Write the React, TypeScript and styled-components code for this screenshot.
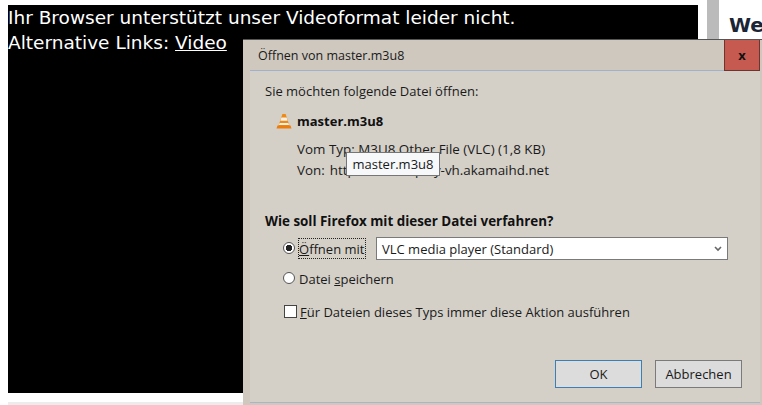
import styled, { createGlobalStyle } from "styled-components";

const GlobalStyle = createGlobalStyle`
  html, body {
    margin: 0;
    padding: 0;
    background-color: #fff;
    overflow: hidden;
  }
`;

const Page = styled.div`
  position: relative;
  width: 762px;
  height: 405px;
  overflow: hidden;
  padding-left: 8px;
  box-sizing: border-box;
  display: flex;
  flex-direction: column;
`;

const Content = styled.div`
  height: 402px;
  display: flex;
  flex-shrink: 0;
`;

const FooterStrip = styled.div`
  flex: 1;
  background-color: #ececec;
`;

const Video = styled.div`
  width: 690px;
  height: 388px;
  flex-shrink: 0;
  margin-top: 5px;
  background-color: #000;
  color: #fff;
  font-family: "DejaVu Sans", Verdana, sans-serif;
  font-size: 18.5px;
  line-height: 25px;
  white-space: nowrap;
`;

const VideoLink = styled.a`
  color: #fff;
  text-decoration: underline;
`;

const Sidebar = styled.div`
  margin-left: 9px;
  display: flex;
  flex-shrink: 0;
  align-items: flex-start;
`;

const SidebarEdge = styled.div`
  width: 12px;
  height: 40px;
  background-color: #bbb;
`;

const SidebarTitle = styled.h2`
  margin: 13px 0 0 10px;
  font-family: "DejaVu Sans", Verdana, sans-serif;
  font-size: 20px;
  line-height: 24px;
  font-weight: 700;
  color: #1b2535;
  white-space: nowrap;
`;

const Dialog = styled.div`
  position: absolute;
  left: 243px;
  top: 39px;
  width: 519px;
  height: 366px;
  box-sizing: border-box;
  background-color: #cfc8bf;
  border-top: 1px solid #555;
  padding: 0 2px 0 7px;
  display: flex;
  flex-direction: column;
  font-family: "Open Sans", "Noto Sans", sans-serif;
  font-size: 13px;
  color: #1a1a1a;
`;

const TitleBar = styled.div`
  height: 31px;
  flex-shrink: 0;
  display: flex;
  align-items: center;
  justify-content: space-between;
  padding-left: 8px;
  box-sizing: border-box;
  border-bottom: 1px solid #9fb1cc;
  font-size: 12.5px;
`;

const CloseButton = styled.div`
  width: 36px;
  height: 31px;
  box-sizing: border-box;
  background-color: #c75a50;
  border: 1px solid #6e3530;
  border-top: 0;
  display: flex;
  align-items: center;
  justify-content: center;
  font-weight: 700;
  font-size: 13px;
  color: #111;
`;

const Body = styled.div`
  flex: 1;
  background-color: #d4d0c8;
  padding: 12px 18px 14px 15px;
  display: flex;
  flex-direction: column;
  position: relative;
`;

const Line = styled.div`
  line-height: 17px;
  white-space: nowrap;
`;

const FileRow = styled.div`
  margin: 12px 0 0 11px;
  display: flex;
  align-items: center;
  gap: 5px;
  height: 18px;
`;

const FileName = styled.span`
  font-weight: 700;
  color: #111;
`;

const FileDetails = styled.div`
  margin: 11px 0 0 32px;
  display: flex;
  flex-direction: column;
  gap: 4px;
  font-size: 13.4px;
`;

const SourceValue = styled.span`
  margin-left: 5px;
`;

const Question = styled(Line)`
  margin-top: 34px;
  font-size: 13.4px;
  font-weight: 700;
  color: #111;
`;

const OpenRow = styled.div`
  margin: 7px 0 0 18px;
  display: flex;
  align-items: center;
  height: 23px;
`;

const SaveRow = styled.div`
  margin: 7px 0 0 18px;
  display: flex;
  align-items: center;
  height: 23px;
`;

const CheckRow = styled.div`
  margin: 10px 0 0 19px;
  display: flex;
  align-items: center;
  height: 23px;
`;

const Radio = styled.span<{ $checked?: boolean }>`
  width: 12px;
  height: 12px;
  box-sizing: border-box;
  border-radius: 50%;
  border: 1px solid #555;
  background: ${(p) =>
    p.$checked
      ? "radial-gradient(circle, #222 0 3px, #fff 3.5px)"
      : "#fff"};
  flex-shrink: 0;
  margin-right: 4px;
  margin-top: -2px;
`;

const CheckBox = styled.span`
  width: 13px;
  height: 13px;
  box-sizing: border-box;
  border: 1px solid #444;
  background-color: #fff;
  flex-shrink: 0;
  margin-right: 3px;
`;

const FocusLabel = styled.span`
  width: 68px;
  height: 21px;
  box-sizing: border-box;
  margin-left: -1px;
  border: 1px dotted #222;
  display: flex;
  align-items: center;
  white-space: nowrap;
`;

const PlainLabel = styled.span`
  white-space: nowrap;
`;

const AccessKey = styled.span`
  text-decoration: underline;
`;

const AppSelect = styled.div`
  margin-left: 10px;
  width: 352px;
  height: 23px;
  box-sizing: border-box;
  background-color: #fff;
  border: 1px solid #7a7a7a;
  padding: 0 5px;
  display: flex;
  align-items: center;
  justify-content: space-between;
`;

const Buttons = styled.div`
  margin-top: auto;
  align-self: flex-end;
  display: flex;
  gap: 13px;
`;

const Button = styled.div<{ $default?: boolean }>`
  width: 87px;
  height: 28px;
  box-sizing: border-box;
  background-color: #dcdcdc;
  border: 1px solid ${(p) => (p.$default ? "#3a7fb5" : "#7a7a7a")};
  display: flex;
  align-items: center;
  justify-content: center;
`;

const BottomLine = styled.div`
  height: 1px;
  flex-shrink: 0;
  background-color: #a9b4c6;
  margin-bottom: 2px;
`;

const Tooltip = styled.div`
  position: absolute;
  left: 96px;
  top: 81px;
  width: 94px;
  height: 24px;
  box-sizing: border-box;
  background-color: #f7f8fa;
  border: 1px solid #767676;
  display: flex;
  align-items: center;
  justify-content: center;
  white-space: nowrap;
`;

const ConeIcon = () => (
  <svg width="16" height="17" viewBox="0 0 16 17">
    <path d="M6.4 1h3.2l4 12H2.4z" fill="#f08a12" />
    <path d="M5.4 4.6h5.2l1 3.2H4.4z" fill="#f4f1ec" />
    <path d="M3.7 10h8.6l.8 2H2.9z" fill="#f4f1ec" />
    <path d="M1.5 12.6h13l1 2.9H.5z" fill="#ee7d0c" />
  </svg>
);

const ChevronIcon = () => (
  <svg width="8" height="6" viewBox="0 0 8 6">
    <path d="M1 1l3 3 3-3" fill="none" stroke="#666" strokeWidth="1.6" />
  </svg>
);

export default function App() {
  return (
    <>
      <GlobalStyle />
      <Page>
        <Content>
          <Video>
            Ihr Browser unterstützt unser Videoformat leider nicht.
            <br />
            Alternative Links: <VideoLink href="#">Video</VideoLink>
          </Video>
          <Sidebar>
            <SidebarEdge />
            <SidebarTitle>Weitere</SidebarTitle>
          </Sidebar>
        </Content>
        <FooterStrip />

        <Dialog>
          <TitleBar>
            Öffnen von master.m3u8
            <CloseButton>x</CloseButton>
          </TitleBar>
          <Body>
            <Line>Sie möchten folgende Datei öffnen:</Line>
            <FileRow>
              <ConeIcon />
              <FileName>master.m3u8</FileName>
            </FileRow>
            <FileDetails>
              <Line>Vom Typ: M3U8 Other File (VLC) (1,8 KB)</Line>
              <Line>
                Von:<SourceValue>http://secure-play-vh.akamaihd.net</SourceValue>
              </Line>
            </FileDetails>
            <Question>Wie soll Firefox mit dieser Datei verfahren?</Question>
            <OpenRow>
              <Radio $checked />
              <FocusLabel>
                <span>
                  <AccessKey>Ö</AccessKey>ffnen mit
                </span>
              </FocusLabel>
              <AppSelect>
                VLC media player (Standard)
                <ChevronIcon />
              </AppSelect>
            </OpenRow>
            <SaveRow>
              <Radio />
              <PlainLabel>
                Datei <AccessKey>s</AccessKey>peichern
              </PlainLabel>
            </SaveRow>
            <CheckRow>
              <CheckBox />
              <PlainLabel>
                <AccessKey>F</AccessKey>ür Dateien dieses Typs immer diese Aktion ausführen
              </PlainLabel>
            </CheckRow>
            <Buttons>
              <Button $default>OK</Button>
              <Button>Abbrechen</Button>
            </Buttons>
            <Tooltip>master.m3u8</Tooltip>
          </Body>
          <BottomLine />
        </Dialog>
      </Page>
    </>
  );
}
